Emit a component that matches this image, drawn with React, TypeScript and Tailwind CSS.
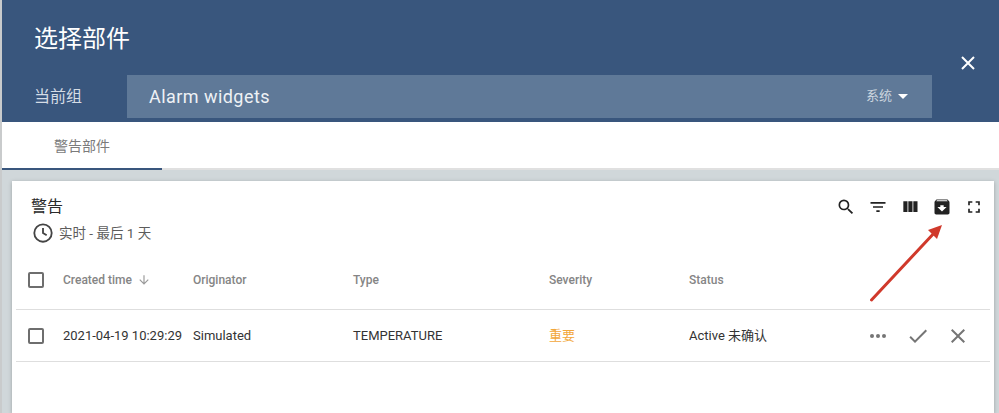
const CJK = "font-['Roboto','Noto_Sans_CJK_SC',sans-serif]"

function Checkbox() {
  return <span className="block w-4 h-4 rounded-[2px] border-2 border-[#6e6e6e]" />
}

function Row({ children, head }: { children: React.ReactNode[]; head?: boolean }) {
  const widths = ['w-[47px]', 'w-[130px]', 'w-[160px]', 'w-[196px]', 'w-[140px]', 'w-[140px]']
  return (
    <div className={`flex items-center ml-[4px] mr-[4px] border-b border-[#dedede] ${head ? 'h-[60px] text-[12px] font-medium text-[#858585]' : 'h-[52px] text-[13px] text-[#333]'}`}>
      {children.map((c, i) => (
        <div key={i} className={i < 6 ? `${widths[i]} shrink-0 ${i === 0 ? 'pl-3' : ''}` : 'flex-1'}>{c}</div>
      ))}
    </div>
  )
}

export default function App() {
  return (
    <div className={`relative w-[999px] h-[413px] overflow-hidden pl-[2px] bg-[#c9cbcc] ${CJK}`}>
      {/* header */}
      <div className="h-[122px] bg-[#39567d] text-white relative pl-[32px]">
        <div className="pt-[23px] text-[24px] leading-[32px]">选择部件</div>
        <div className="flex items-center mt-[20px] h-[43px]">
          <div className="w-[93px] text-[16px] text-[#d5dce5]">当前组</div>
          <div className="w-[805px] h-[43px] bg-[#5f7998] flex items-center justify-between pl-[22px] pr-[24px]">
            <span className="text-[18px] text-[#eef1f5] tracking-[0.45px]">Alarm widgets</span>
            <span className="flex items-center gap-[6px] text-[13px] leading-[18px] pb-[1px] text-[#ccd5df]">
              系统
              <svg width="10" height="5" viewBox="0 0 10 5"><path d="M0 0h10L5 5z" fill="#fff" /></svg>
            </span>
          </div>
        </div>
        <svg className="absolute left-[959px] top-[56px]" width="14" height="14" viewBox="0 0 14 14" fill="none" stroke="#fff" strokeWidth="2">
          <path d="M1 1l12 12M13 1L1 13" />
        </svg>
      </div>

      {/* tabs */}
      <div className="h-[48px] bg-white border-b-2 border-[#e0e0e0]">
        <div className="w-[160px] h-[48px] border-b-2 border-[#39567d] flex items-center justify-center pt-[2px] text-[14px] text-[#7b7b7b]">
          警告部件
        </div>
      </div>

      {/* widget area */}
      <div className="h-[243px] bg-[#d0d7da] pl-[10px] pr-[5px] pt-[11px]">
        <div className="h-full bg-white shadow-[0_1px_4px_rgba(0,0,0,0.25)]">
          <div className="flex justify-between h-[69px] pl-[19px] pr-[10px]">
            <div>
              <div className="pt-[15px] text-[16px] leading-[22px] text-[#2a2a2a]">警告</div>
              <div className="flex items-center gap-[5px] mt-[4px] ml-[1px] text-[14px] leading-[22px] text-[#5c5c5c]">
                <svg width="22" height="22" viewBox="0 0 24 24" fill="none" stroke="#444" strokeWidth="2">
                  <circle cx="12" cy="12" r="9.5" />
                  <path d="M12 6.5V12l4 2.5" />
                </svg>
                <span className="text-[13.5px]">实时 - 最后 1 天</span>
              </div>
            </div>
            <div className="flex items-start gap-[12px] pt-[16px] text-[#222]">
              <svg width="20" height="20" viewBox="0 0 24 24" fill="#222"><path d="M15.5 14h-.79l-.28-.27A6.47 6.47 0 0 0 16 9.5 6.5 6.5 0 1 0 9.5 16c1.61 0 3.09-.59 4.23-1.57l.27.28v.79l5 4.99L20.49 19l-4.99-5zm-6 0C7.01 14 5 11.99 5 9.5S7.01 5 9.5 5 14 7.01 14 9.5 11.99 14 9.5 14z" /></svg>
              <svg width="20" height="20" viewBox="0 0 24 24" fill="#222"><path d="M10 18h4v-2h-4v2zM3 6v2h18V6H3zm3 7h12v-2H6v2z" /></svg>
              <svg width="20" height="20" viewBox="0 0 24 24" fill="#222"><path d="M10 18h5V5h-5v13zm-6 0h5V5H4v13zM16 5v13h5V5h-5z" /></svg>
              <svg width="20" height="20" viewBox="0 0 24 24" fill="#222"><path d="M20.54 5.23l-1.39-1.68C18.88 3.21 18.47 3 18 3H6c-.47 0-.88.21-1.16.55L3.46 5.23C3.17 5.57 3 6.02 3 6.5V19c0 1.1.9 2 2 2h14c1.1 0 2-.9 2-2V6.5c0-.48-.17-.93-.46-1.27zM12 17.5 6.5 12H10v-2h4v2h3.5L12 17.5zM5.12 5l.81-1h12l.94 1H5.12z" /></svg>
              <svg width="20" height="20" viewBox="0 0 24 24" fill="#222"><path d="M7 14H5v5h5v-2H7v-3zm-2-4h2V7h3V5H5v5zm12 7h-3v2h5v-5h-2v3zM14 5v2h3v3h2V5h-5z" /></svg>
            </div>
          </div>

          <Row head>
            <Checkbox />
            <span className="flex items-center gap-[5px]">
              Created time
              <svg width="14" height="14" viewBox="0 0 24 24" fill="#9a9a9a"><path d="M20 12l-1.41-1.41L13 16.17V4h-2v12.17l-5.58-5.59L4 12l8 8 8-8z" /></svg>
            </span>
            <span>Originator</span>
            <span>Type</span>
            <span>Severity</span>
            <span>Status</span>
            <span />
          </Row>
          <Row>
            <Checkbox />
            <span className="whitespace-nowrap">2021-04-19 10:29:29</span>
            <span>Simulated</span>
            <span>TEMPERATURE</span>
            <span className="text-[#f2a73b]">重要</span>
            <span>Active 未确认</span>
            <span className="flex items-center gap-[16px] pl-[37px] text-[#757575]">
              <svg width="24" height="24" viewBox="0 0 24 24" fill="#757575"><circle cx="6" cy="12" r="2" /><circle cx="12" cy="12" r="2" /><circle cx="18" cy="12" r="2" /></svg>
              <svg width="24" height="24" viewBox="0 0 24 24" fill="#757575"><path d="M9 16.17 4.83 12l-1.42 1.41L9 19 21 7l-1.41-1.41z" /></svg>
              <svg width="24" height="24" viewBox="0 0 24 24" fill="#757575"><path d="M19 6.41 17.59 5 12 10.59 6.41 5 5 6.41 10.59 12 5 17.59 6.41 19 12 13.41 17.59 19 19 17.59 13.41 12z" /></svg>
            </span>
          </Row>
        </div>
      </div>

      {/* red annotation arrow */}
      <svg className="absolute left-0 top-0 pointer-events-none" width="999" height="413" fill="none">
        <path d="M871.5 300L936 231" stroke="#d0392b" strokeWidth="3" strokeLinecap="round" />
        <path d="M942 225l-14 5 9 9z" fill="#d0392b" />
      </svg>
    </div>
  )
}
